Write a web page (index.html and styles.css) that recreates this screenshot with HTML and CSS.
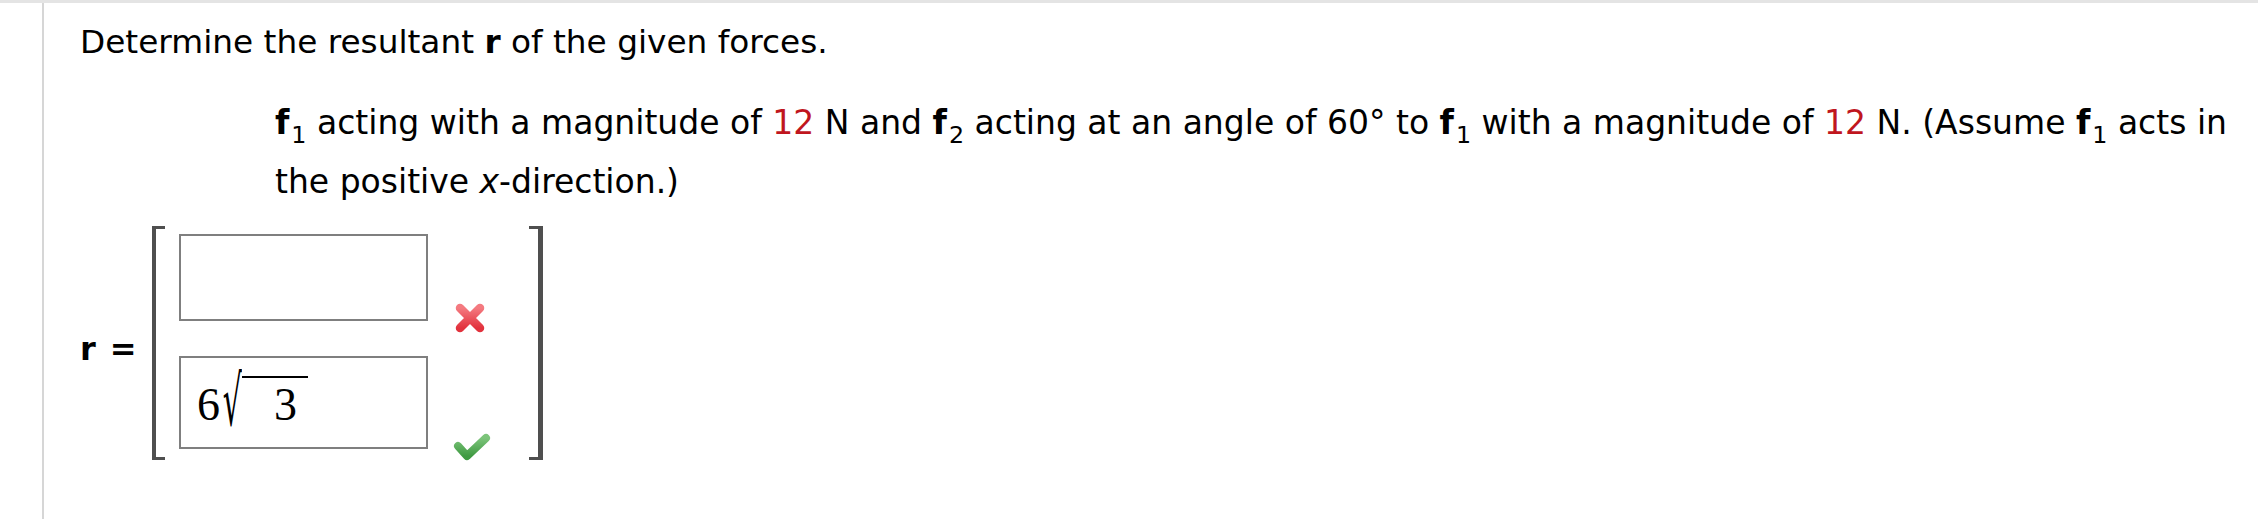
FILE: index.html
```html
<!DOCTYPE html>
<html>
<head>
<meta charset="utf-8">
<title>Resultant of forces</title>
<link rel="stylesheet" href="styles.css">
</head>
<body>
<div class="page">
  <div class="question">
    <p class="intro">Determine the resultant <b>r</b> of the given forces.</p>
    <p class="given"><b>f</b><sub>1</sub> acting with a magnitude of <span class="red">12</span> N and <b>f</b><sub>2</sub> acting at an angle of 60° to <b>f</b><sub>1</sub> with a magnitude of <span class="red">12</span> N. (Assume <b>f</b><sub>1</sub> acts in the positive <i>x</i>-direction.)</p>
    <div class="answer">
      <div class="lhs"><b>r</b><span class="eq">=</span></div>
      <div class="matrix">
        <div class="bracket left"></div>
        <div class="cells">
          <div class="row">
            <div class="box box-top"></div>
            <svg class="icon icon-x" width="34" height="34" viewBox="0 0 34 34">
              <defs>
                <linearGradient id="xg" x1="0" y1="0" x2="0" y2="1">
                  <stop offset="0" stop-color="#f47a80"/>
                  <stop offset="1" stop-color="#e2323d"/>
                </linearGradient>
              </defs>
              <path d="M7 7 L27 27 M27 7 L7 27" stroke="url(#xg)" stroke-width="8.5" stroke-linecap="round" fill="none"/>
            </svg>
          </div>
          <div class="row">
            <div class="box box-bottom"><span class="math"><span class="digit">6</span><span class="rad">√</span><span class="radicand">3</span></span></div>
            <svg class="icon icon-check" width="38" height="30" viewBox="0 0 38 30">
              <defs>
                <linearGradient id="cg" x1="0" y1="0" x2="0" y2="1">
                  <stop offset="0" stop-color="#7cc47a"/>
                  <stop offset="1" stop-color="#3f9a42"/>
                </linearGradient>
              </defs>
              <path d="M5 14 L14 24 L33 6" stroke="url(#cg)" stroke-width="8" stroke-linecap="round" stroke-linejoin="round" fill="none"/>
            </svg>
          </div>
        </div>
        <div class="bracket right"></div>
      </div>
    </div>
  </div>
</div>
</body>
</html>
```

FILE: styles.css
```css
html, body {
  margin: 0;
  padding: 0;
  background: #ffffff;
}

body {
  font-family: "DejaVu Sans", Verdana, sans-serif;
  color: #000000;
}

.page {
  border-top: 3px solid #e4e4e4;
  height: 516px;
}

.question {
  margin-left: 42px;
  border-left: 2px solid #d6d6d6;
  height: 100%;
  box-sizing: border-box;
  padding-left: 36px;
}

.intro {
  margin: 0;
  padding-top: 19px;
  font-size: 32.75px;
  line-height: 40px;
}

.given {
  margin: 31px 0 0 195px;
  width: 1970px;
  font-size: 33px;
  line-height: 59px;
}

.given sub {
  font-size: 0.72em;
  line-height: 1;
  vertical-align: -0.38em;
  margin-left: 2px;
}

.red {
  color: #c0161e;
}

.answer {
  display: flex;
  align-items: center;
  margin-top: 15px;
}

.lhs {
  width: 72px;
  font-family: "DejaVu Sans", Verdana, sans-serif;
  font-weight: 700;
  font-size: 32px;
  display: flex;
  align-items: baseline;
  padding-top: 12px;
}

.eq {
  margin-left: 14px;
  font-weight: 700;
}

.matrix {
  display: flex;
  align-items: stretch;
}

.bracket {
  width: 9px;
  border: 3px solid #4f4f4f;
}

.bracket.left {
  border-left-width: 4px;
  border-right: none;
}

.bracket.right {
  border-right-width: 5px;
  border-left: none;
  margin-left: 38px;
}

.cells {
  display: flex;
  flex-direction: column;
  gap: 35px;
  padding: 8px 0 11px 0;
  margin-left: 14px;
}

.row {
  display: flex;
  align-items: flex-end;
}

.box {
  width: 249px;
  border: 2px solid #7f7f7f;
  box-sizing: border-box;
  background: #ffffff;
}

.box-top {
  height: 87px;
}

.box-bottom {
  height: 93px;
  padding: 18px 0 0 16px;
}

.icon {
  display: block;
  margin-left: 25px;
}

.icon-x {
  margin-bottom: -14px;
}

.icon-check {
  margin-bottom: -13px;
}

.math {
  display: block;
  font-family: "Liberation Serif", "Times New Roman", serif;
  font-size: 46px;
  line-height: 53px;
  white-space: nowrap;
}

.rad {
  display: inline-block;
  font-family: "DejaVu Serif", serif;
  font-size: 50px;
  line-height: 1;
  vertical-align: -5px;
  margin-left: -10px;
  transform: scale(0.6, 1.38);
  transform-origin: right 85%;
}

.radicand {
  display: inline-block;
  border-top: 2px solid #000000;
  padding-left: 32px;
  padding-right: 11px;
  line-height: 53px;
}
```
